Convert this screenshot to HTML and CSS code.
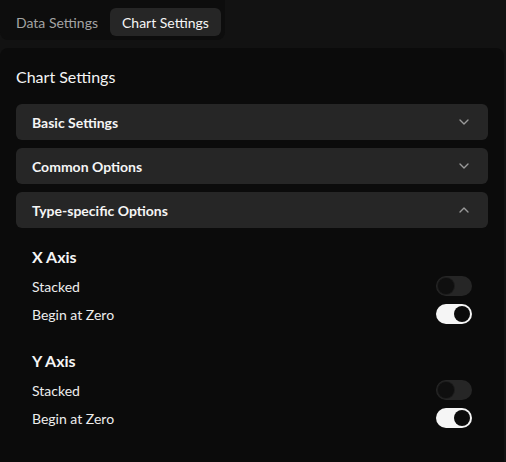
FILE: index.html
```html
<!DOCTYPE html>
<html>
<head>
<meta charset="utf-8">
<link rel="stylesheet" href="styles.css">
</head>
<body>
<div class="tabs">
  <div class="tab">Data Settings</div>
  <div class="tab active">Chart Settings</div>
</div>
<div class="panel">
  <h2 class="panel-title">Chart Settings</h2>
  <div class="accordion">
    <div class="acc-head">
      <span>Basic Settings</span>
      <svg class="chev" viewBox="0 0 24 24" width="16" height="16"><path d="m6 9 6 6 6-6"/></svg>
    </div>
    <div class="acc-head">
      <span>Common Options</span>
      <svg class="chev" viewBox="0 0 24 24" width="16" height="16"><path d="m6 9 6 6 6-6"/></svg>
    </div>
    <div class="acc-head">
      <span>Type-specific Options</span>
      <svg class="chev" viewBox="0 0 24 24" width="16" height="16"><path d="m18 15-6-6-6 6"/></svg>
    </div>
  </div>
  <div class="acc-body">
    <div class="group">
      <h3 class="group-title">X Axis</h3>
      <div class="row"><span>Stacked</span><span class="switch"></span></div>
      <div class="row"><span>Begin at Zero</span><span class="switch on"></span></div>
    </div>
    <div class="group">
      <h3 class="group-title">Y Axis</h3>
      <div class="row"><span>Stacked</span><span class="switch"></span></div>
      <div class="row"><span>Begin at Zero</span><span class="switch on"></span></div>
    </div>
  </div>
</div>
</body>
</html>
```

FILE: styles.css
```css
* { box-sizing: border-box; }
html, body {
  margin: 0;
  padding: 0;
  background: #121212;
  font-family: Lato, "Open Sans", sans-serif;
  color: #f2f2f2;
  overflow: hidden;
  height: 100%;
}
.tabs {
  display: inline-flex;
  background: #0d0d0d;
  padding: 8px 4px 4px 4px;
  border-radius: 0 0 8px 8px;
  height: 40px;
}
.tab {
  padding: 0 12px;
  height: 28px;
  line-height: 29px;
  font-size: 14px;
  color: #a3a3a3;
  border-radius: 6px;
}
.tab.active {
  background: #262626;
  color: #f5f5f5;
}
.panel {
  margin-top: 8px;
  width: 504px;
  height: 420px;
  background: #0b0b0b;
  border-radius: 8px 8px 0 0;
  padding: 16px;
}
.panel-title {
  margin: 0 0 16px 0;
  font-size: 16px;
  font-weight: 400;
  line-height: 26px;
  height: 24px;
  color: #f5f5f5;
}
.accordion {
  display: flex;
  flex-direction: column;
  gap: 8px;
}
.acc-head {
  height: 36px;
  background: #262626;
  border-radius: 6px;
  display: flex;
  align-items: center;
  justify-content: space-between;
  padding: 0 16px;
  font-size: 14px;
  font-weight: 700;
  color: #f5f5f5;
}
.chev {
  fill: none;
  stroke: #9a9a9a;
  stroke-width: 2;
  stroke-linecap: round;
  stroke-linejoin: round;
}
.acc-body {
  padding: 18px 16px 0 16px;
}
.group + .group { margin-top: 22px; }
.group-title {
  margin: 0 0 4px 0;
  font-size: 16px;
  font-weight: 700;
  line-height: 22px;
  color: #f5f5f5;
}
.row {
  display: flex;
  align-items: center;
  justify-content: space-between;
  height: 28px;
  font-size: 14px;
  color: #ededed;
}
.switch {
  width: 36px;
  height: 20px;
  border-radius: 10px;
  background: #262626;
  position: relative;
}
.switch::after {
  content: "";
  position: absolute;
  top: 2px;
  left: 2px;
  width: 16px;
  height: 16px;
  border-radius: 50%;
  background: #0f0f0f;
  box-shadow: 0 0 0 1px #1c1c1c;
}
.switch.on { background: #f5f5f5; }
.switch.on::after {
  left: 18px;
  background: #0b0b0b;
  box-shadow: none;
}
```
